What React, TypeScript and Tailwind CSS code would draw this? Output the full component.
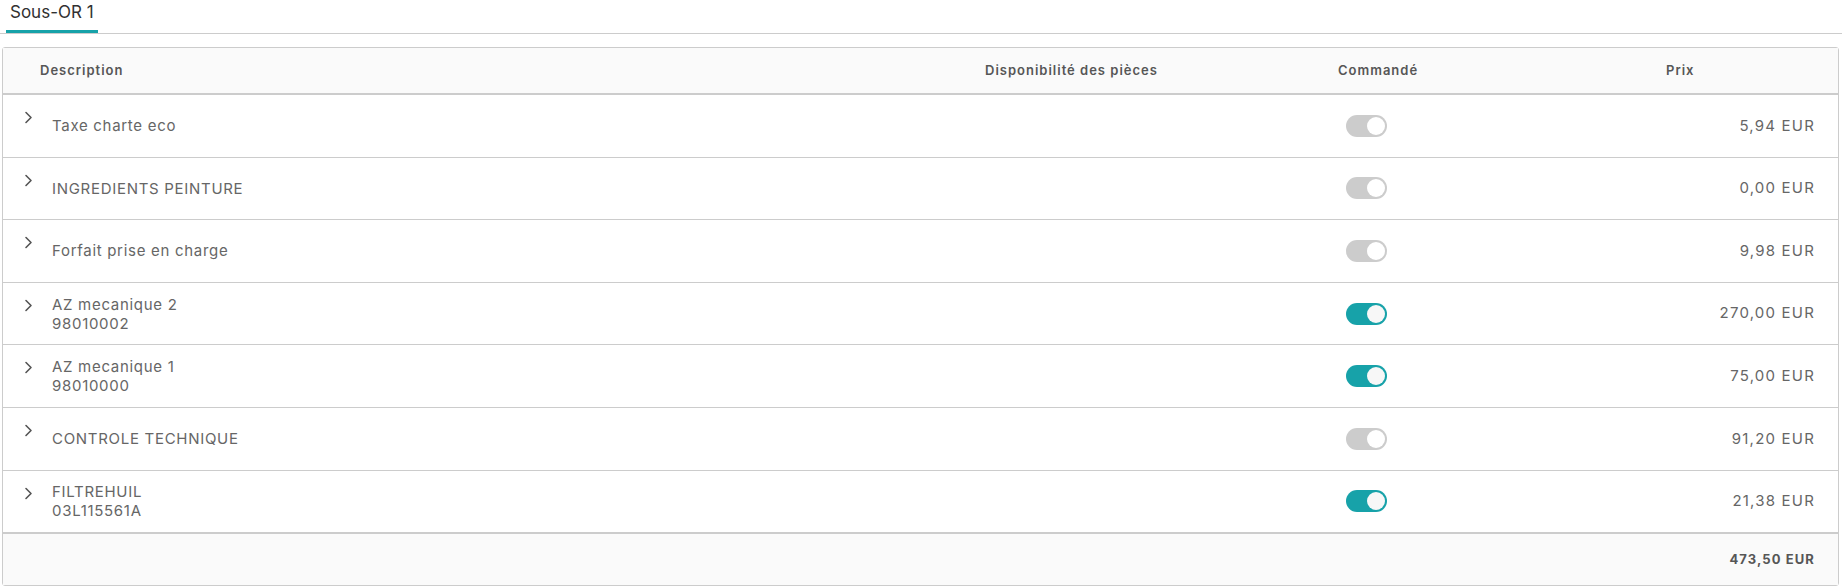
import React from "react";

type Line = {
  label: string;
  code?: string;
  ordered: boolean;
  price: string;
};

const lines: Line[] = [
  { label: "Taxe charte eco", ordered: false, price: "5,94 EUR" },
  { label: "INGREDIENTS PEINTURE", ordered: false, price: "0,00 EUR" },
  { label: "Forfait prise en charge", ordered: false, price: "9,98 EUR" },
  { label: "AZ mecanique 2", code: "98010002", ordered: true, price: "270,00 EUR" },
  { label: "AZ mecanique 1", code: "98010000", ordered: true, price: "75,00 EUR" },
  { label: "CONTROLE TECHNIQUE", ordered: false, price: "91,20 EUR" },
  { label: "FILTREHUIL", code: "03L115561A", ordered: true, price: "21,38 EUR" },
];

const cols = "grid grid-cols-[970px_353px_328px_1fr]";

function Chevron() {
  return (
    <svg width="9" height="13" viewBox="0 0 9 13" fill="none" className="shrink-0">
      <polyline points="2,1.5 7,6.5 2,11.5" stroke="#555" strokeWidth="1.6" strokeLinecap="round" strokeLinejoin="round" />
    </svg>
  );
}

function Toggle({ on }: { on: boolean }) {
  return (
    <div
      className={
        "relative h-[22px] w-[41px] rounded-full " + (on ? "bg-[#17a2a9]" : "bg-[#cccccc]")
      }
    >
      <div
        className={
          "absolute right-[2px] top-[2px] h-[18px] w-[18px] rounded-full " +
          (on ? "bg-[#f7f7f7]" : "bg-white")
        }
      />
    </div>
  );
}

export default function App() {
  return (
    <div className="h-[586px] w-[1842px] bg-white font-['Inter',sans-serif]">
      {/* tabs */}
      <div className="flex h-[34px] border-b border-[#cccccc]">
        <div className="ml-[6px] flex h-[33px] items-start border-b-[3px] border-[#17a2a9] px-[4px] pt-[1px] text-[17px] leading-[22px] text-[#313131]">
          Sous-OR 1
        </div>
      </div>

      {/* grid */}
      <div className="mx-[2px] mt-[13px] w-[1837px] rounded-[3px] border border-[#cccccc]">
        <div className={cols + " h-[47px] items-center border-b-2 border-[#cccccc] bg-[#fafafa] text-[13px] font-semibold tracking-[1px] text-[#565656]"}>
          <div className="pl-[37px]">Description</div>
          <div className="pl-[12px]">Disponibilité des pièces</div>
          <div className="pl-[12px]">Commandé</div>
          <div className="pl-[12px]">Prix</div>
        </div>

        {lines.map((l) => (
          <div key={l.label} className={cols + " h-[62.6px] border-b border-[#cccccc] text-[15px] tracking-[0.7px] text-[#666666]"}>
            <div className="flex pl-[21px]">
              <div className="pt-[16px]">
                <Chevron />
              </div>
              <div className="ml-[19px] flex flex-col justify-center leading-[19px]">
                <span>{l.label}</span>
                {l.code && <span>{l.code}</span>}
              </div>
            </div>
            <div />
            <div className="flex items-center pl-[20px]">
              <Toggle on={l.ordered} />
            </div>
            <div className="flex items-center justify-end pr-[23px] tracking-[1.2px]">{l.price}</div>
          </div>
        ))}

        <div className="flex h-[52px] items-center justify-end border-t border-[#cccccc] bg-[#fafafa] pr-[23px] text-[13px] font-bold tracking-[1.1px] text-[#565656]">
          473,50 EUR
        </div>
      </div>
    </div>
  );
}
